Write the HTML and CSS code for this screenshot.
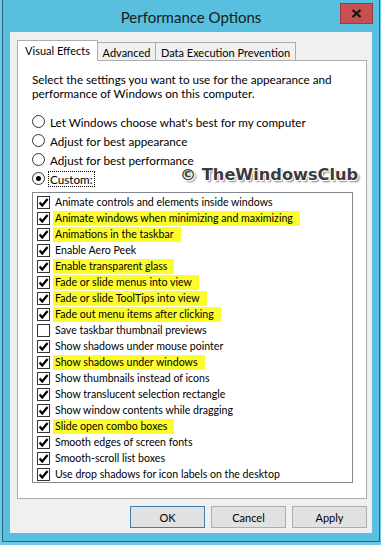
FILE: index.html
```html
<!DOCTYPE html>
<html>
<head>
<meta charset="utf-8">
<link rel="stylesheet" href="styles.css">
</head>
<body>
<svg width="0" height="0" class="defs">
  <symbol id="chk" viewBox="0 0 13 13">
    <rect x="0.5" y="0.5" width="12" height="12" fill="#fff" stroke="#333"/>
    <path d="M2.6 6.4 L5.2 9.4 L10.6 3" fill="none" stroke="#000" stroke-width="2.3"/>
  </symbol>
  <symbol id="unchk" viewBox="0 0 13 13">
    <rect x="0.5" y="0.5" width="12" height="12" fill="#fff" stroke="#333"/>
  </symbol>
</svg>
<div class="window">
  <div class="titlebar">
    <span></span>
    <span class="title">Performance Options</span>
    <div class="close"><svg width="11" height="9" viewBox="0 0 11 9"><path d="M1.5 1 L9.5 8 M9.5 1 L1.5 8" stroke="#111" stroke-width="2.2"/></svg></div>
  </div>
  <div class="client">
    <div class="tabs">
      <div class="tab selected">Visual Effects</div>
      <div class="tab adv">Advanced</div>
      <div class="tab dep">Data Execution Prevention</div>
    </div>
    <div class="panel">
      <p class="intro">Select the settings you want to use for the appearance and<br>performance of Windows on this computer.</p>
      <div class="radios">
        <div class="radio-row"><span class="radio"></span><span class="rlabel">Let Windows choose what's best for my computer</span></div>
        <div class="radio-row"><span class="radio"></span><span class="rlabel">Adjust for best appearance</span></div>
        <div class="radio-row"><span class="radio"></span><span class="rlabel">Adjust for best performance</span></div>
        <div class="radio-row"><span class="radio checked"></span><span class="rlabel focus">Custom:</span></div>
      </div>
      <div class="listbox">
        <div class="item"><svg class="cb"><use href="#chk"/></svg><span class="lbl">Animate controls and elements inside windows</span></div>
        <div class="item"><svg class="cb"><use href="#chk"/></svg><span class="lbl hl">Animate windows when minimizing and maximizing</span></div>
        <div class="item"><svg class="cb"><use href="#chk"/></svg><span class="lbl hl">Animations in the taskbar</span></div>
        <div class="item"><svg class="cb"><use href="#chk"/></svg><span class="lbl">Enable Aero Peek</span></div>
        <div class="item"><svg class="cb"><use href="#chk"/></svg><span class="lbl hl">Enable transparent glass</span></div>
        <div class="item"><svg class="cb"><use href="#chk"/></svg><span class="lbl hl">Fade or slide menus into view</span></div>
        <div class="item"><svg class="cb"><use href="#chk"/></svg><span class="lbl hl">Fade or slide ToolTips into view</span></div>
        <div class="item"><svg class="cb"><use href="#chk"/></svg><span class="lbl hl">Fade out menu items after clicking</span></div>
        <div class="item"><svg class="cb"><use href="#unchk"/></svg><span class="lbl">Save taskbar thumbnail previews</span></div>
        <div class="item"><svg class="cb"><use href="#chk"/></svg><span class="lbl">Show shadows under mouse pointer</span></div>
        <div class="item"><svg class="cb"><use href="#chk"/></svg><span class="lbl hl">Show shadows under windows</span></div>
        <div class="item"><svg class="cb"><use href="#chk"/></svg><span class="lbl">Show thumbnails instead of icons</span></div>
        <div class="item"><svg class="cb"><use href="#chk"/></svg><span class="lbl">Show translucent selection rectangle</span></div>
        <div class="item"><svg class="cb"><use href="#chk"/></svg><span class="lbl">Show window contents while dragging</span></div>
        <div class="item"><svg class="cb"><use href="#chk"/></svg><span class="lbl hl">Slide open combo boxes</span></div>
        <div class="item"><svg class="cb"><use href="#chk"/></svg><span class="lbl">Smooth edges of screen fonts</span></div>
        <div class="item"><svg class="cb"><use href="#chk"/></svg><span class="lbl">Smooth-scroll list boxes</span></div>
        <div class="item"><svg class="cb"><use href="#chk"/></svg><span class="lbl">Use drop shadows for icon labels on the desktop</span></div>
      </div>
      <div class="watermark">© TheWindowsClub</div>
    </div>
    <div class="buttons">
      <div class="btn default">OK</div>
      <div class="btn">Cancel</div>
      <div class="btn">Apply</div>
    </div>
  </div>
</div>
</body>
</html>
```
FILE: styles.css
```css
html, body {
  margin: 0;
  padding: 0;
}
body {
  background: #6ccbe8;
  width: 381px;
  height: 545px;
  overflow: hidden;
  font-family: Lato, "Liberation Sans", sans-serif;
  font-size: 12px;
  color: #000;
}
.defs {
  position: absolute;
}
.window {
  margin-left: 2px;
  width: 376px;
  height: 541px;
  background: #58bfdf;
  border: 1px solid #2c6576;
  border-top: none;
}
.titlebar {
  height: 32px;
  display: grid;
  grid-template-columns: 1fr auto 1fr;
}
.title {
  font-size: 15px;
  color: #1a1a1a;
  align-self: center;
  padding-top: 2px;
}
.close {
  justify-self: end;
  align-self: start;
  margin-top: 3px;
  margin-right: 6px;
  width: 31px;
  height: 19px;
  background: #c75050;
  border: 1px solid #9a3c3c;
  display: flex;
  align-items: center;
  justify-content: center;
}
.client {
  margin: 0 7px;
  height: 501px;
  background: #f0f0f0;
  padding: 8px 5px 0 7px;
  box-sizing: border-box;
}
.tabs {
  display: flex;
  align-items: flex-end;
  height: 20px;
  font-size: 11px;
}
.tab {
  box-sizing: border-box;
  border: 1px solid #adadad;
  border-bottom: none;
  height: 18px;
  background: #f0f0f0;
  display: flex;
  align-items: center;
  justify-content: center;
  padding-top: 1px;
  white-space: nowrap;
}
.tab.selected {
  width: 81px;
  height: 21px;
  margin-bottom: -1px;
  background: #fff;
  position: relative;
  z-index: 1;
  padding-bottom: 2px;
}
.tab.adv {
  width: 59px;
  margin-left: -1px;
}
.tab.dep {
  width: 141px;
  margin-left: -1px;
}
.panel {
  position: relative;
  box-sizing: border-box;
  width: 350px;
  height: 439px;
  background: #fff;
  border: 1px solid #adadad;
  padding: 11px 0 0 14px;
}
.intro {
  margin: 0;
  line-height: 14px;
  font-size: 11.7px;
}
.radios {
  margin-top: 12px;
  font-size: 11.7px;
}
.radio-row {
  height: 19px;
  display: flex;
  align-items: center;
}
.radio {
  box-sizing: border-box;
  width: 13px;
  height: 13px;
  border: 1px solid #333;
  border-radius: 50%;
  background: #fff;
  display: flex;
  align-items: center;
  justify-content: center;
}
.radio.checked::after {
  content: "";
  width: 5px;
  height: 5px;
  border-radius: 50%;
  background: #000;
}
.rlabel {
  margin-left: 3px;
  padding: 0 1px;
  border: 1px dotted transparent;
  line-height: 14px;
}
.rlabel.focus {
  border-color: #000;
}
.listbox {
  box-sizing: border-box;
  margin-top: 4px;
  width: 321px;
  height: 291px;
  border: 1px solid #828790;
  padding: 1px 0 0 4px;
  font-size: 10.6px;
}
.item {
  height: 16px;
  display: flex;
  align-items: center;
}
.cb {
  width: 13px;
  height: 13px;
  flex: none;
}
.lbl {
  margin-left: 3px;
  padding: 0 7px 0 2px;
  line-height: 15px;
  white-space: nowrap;
}
.lbl.hl {
  background: #fcfc2c;
}
.watermark {
  position: absolute;
  left: 162px;
  top: 104px;
  white-space: nowrap;
  font-family: "DejaVu Sans", sans-serif;
  font-weight: bold;
  font-size: 16.2px;
  color: #3b3b3b;
  text-shadow: 1px 1px 0 #fff, -1px -1px 0 #fff, 1px -1px 0 #fff, -1px 1px 0 #fff, 2px 2px 2px #777;
}
.buttons {
  display: flex;
  justify-content: flex-end;
  gap: 6px;
  margin-top: 7px;
}
.btn {
  box-sizing: border-box;
  width: 75px;
  height: 22px;
  background: #e1e1e1;
  border: 1px solid #adadad;
  display: flex;
  align-items: center;
  justify-content: center;
  font-size: 11px;
}
.btn.default {
  border-color: #3c7fb1;
}
```
